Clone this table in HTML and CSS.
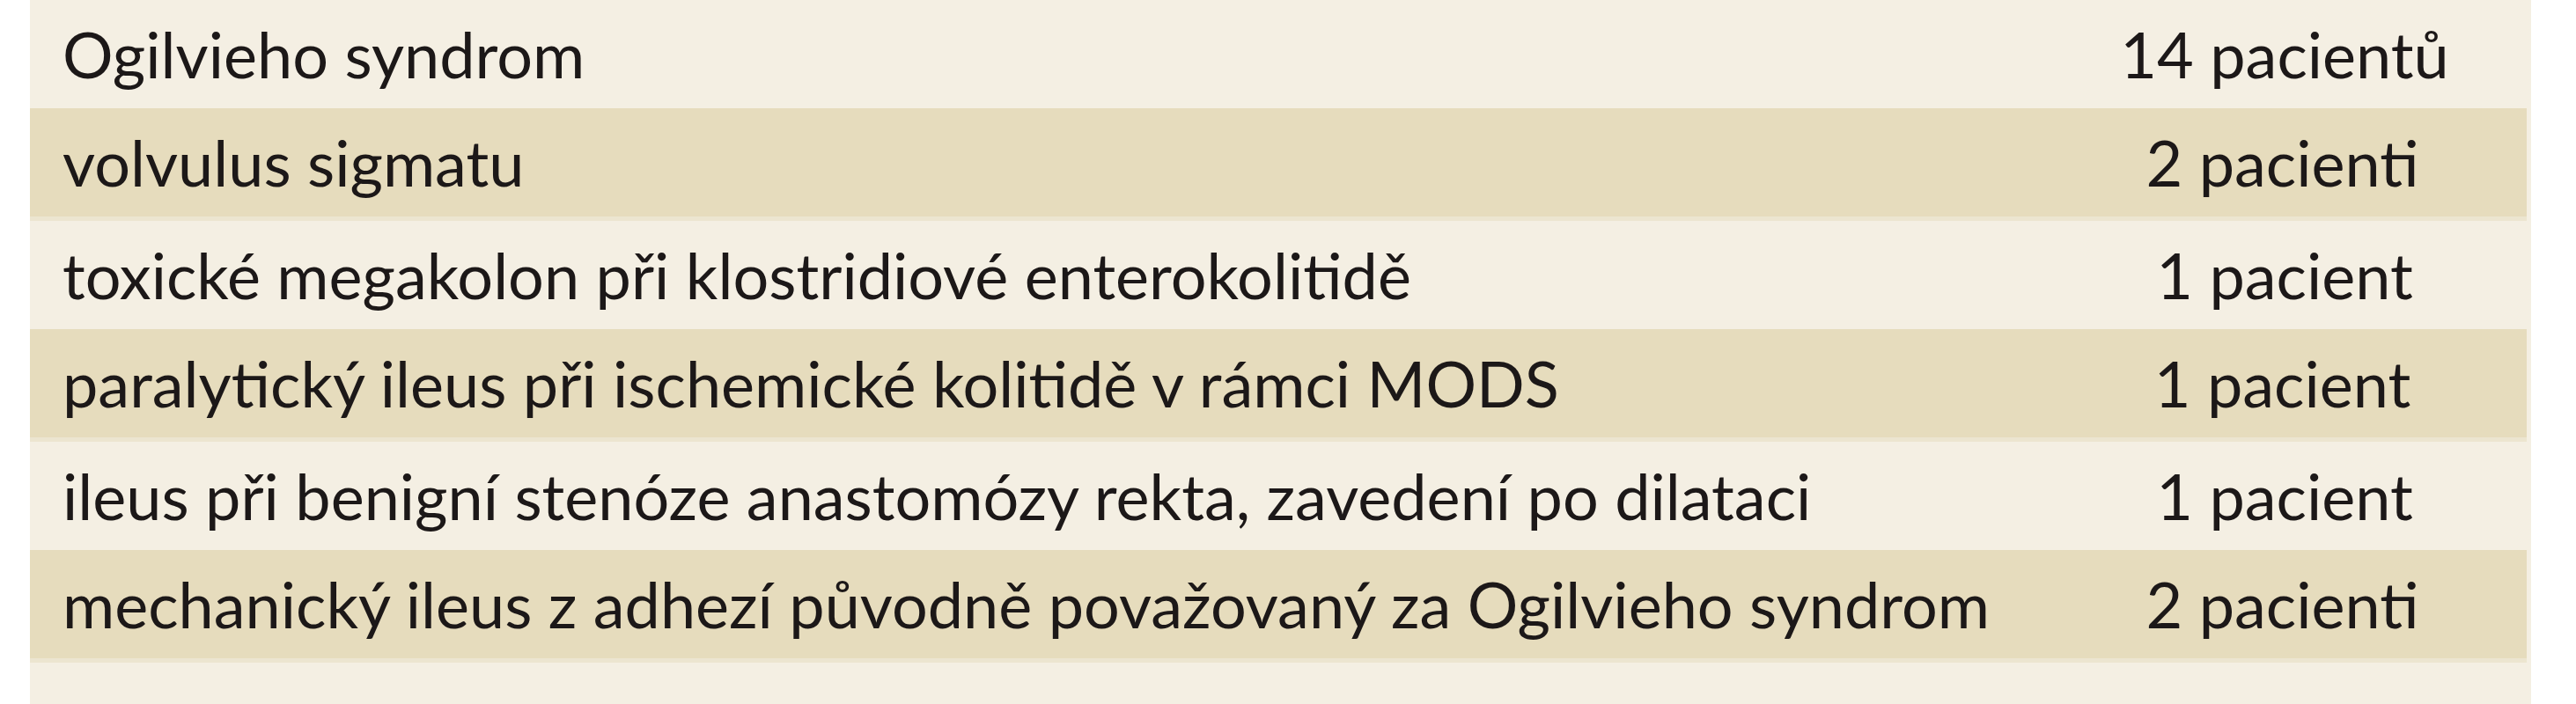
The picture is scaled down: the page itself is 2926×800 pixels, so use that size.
FILE: index.html
```html
<!DOCTYPE html>
<html lang="cs">
<head>
<meta charset="utf-8">
<title>Tabulka</title>
<link rel="stylesheet" href="styles.css">
</head>
<body>
<div class="panel">
  <div class="row">
    <div class="cell-label">Ogilvieho syndrom</div>
    <div class="cell-count">14 pacientů</div>
  </div>
  <div class="row alt">
    <div class="cell-label">volvulus sigmatu</div>
    <div class="cell-count">2 pacienti</div>
  </div>
  <div class="row">
    <div class="cell-label">toxické megakolon při klostridiové enterokolitidě</div>
    <div class="cell-count">1 pacient</div>
  </div>
  <div class="row alt">
    <div class="cell-label">paralytický ileus při ischemické kolitidě v rámci MODS</div>
    <div class="cell-count">1 pacient</div>
  </div>
  <div class="row">
    <div class="cell-label">ileus při benigní stenóze anastomózy rekta, zavedení po dilataci</div>
    <div class="cell-count">1 pacient</div>
  </div>
  <div class="row alt">
    <div class="cell-label">mechanický ileus z adhezí původně považovaný za Ogilvieho syndrom</div>
    <div class="cell-count">2 pacienti</div>
  </div>
</div>
</body>
</html>
```

FILE: styles.css
```css
html, body {
  margin: 0;
  padding: 0;
  background: #ffffff;
}

body {
  font-family: "Lato", "Open Sans", sans-serif;
  color: #1c1818;
}

.panel {
  width: 2841px;
  height: 800px;
  margin-left: 34px;
  background: #f4efe3;
  display: flex;
  flex-direction: column;
}

.row {
  display: grid;
  grid-template-columns: 1fr 560px;
  height: 123px;
  box-sizing: border-box;
  font-size: 72px;
  line-height: 84px;
  padding-top: 19px;
}

.row.alt {
  height: 128px;
  margin-right: 5px;
  background: #e6dcbd;
  border-bottom: 5px solid #ece5d0;
}

.row.alt .cell-count {
  margin-right: -5px;
}

.cell-label {
  padding-left: 37px;
  white-space: nowrap;
}

.cell-count {
  text-align: center;
  white-space: nowrap;
}
```
